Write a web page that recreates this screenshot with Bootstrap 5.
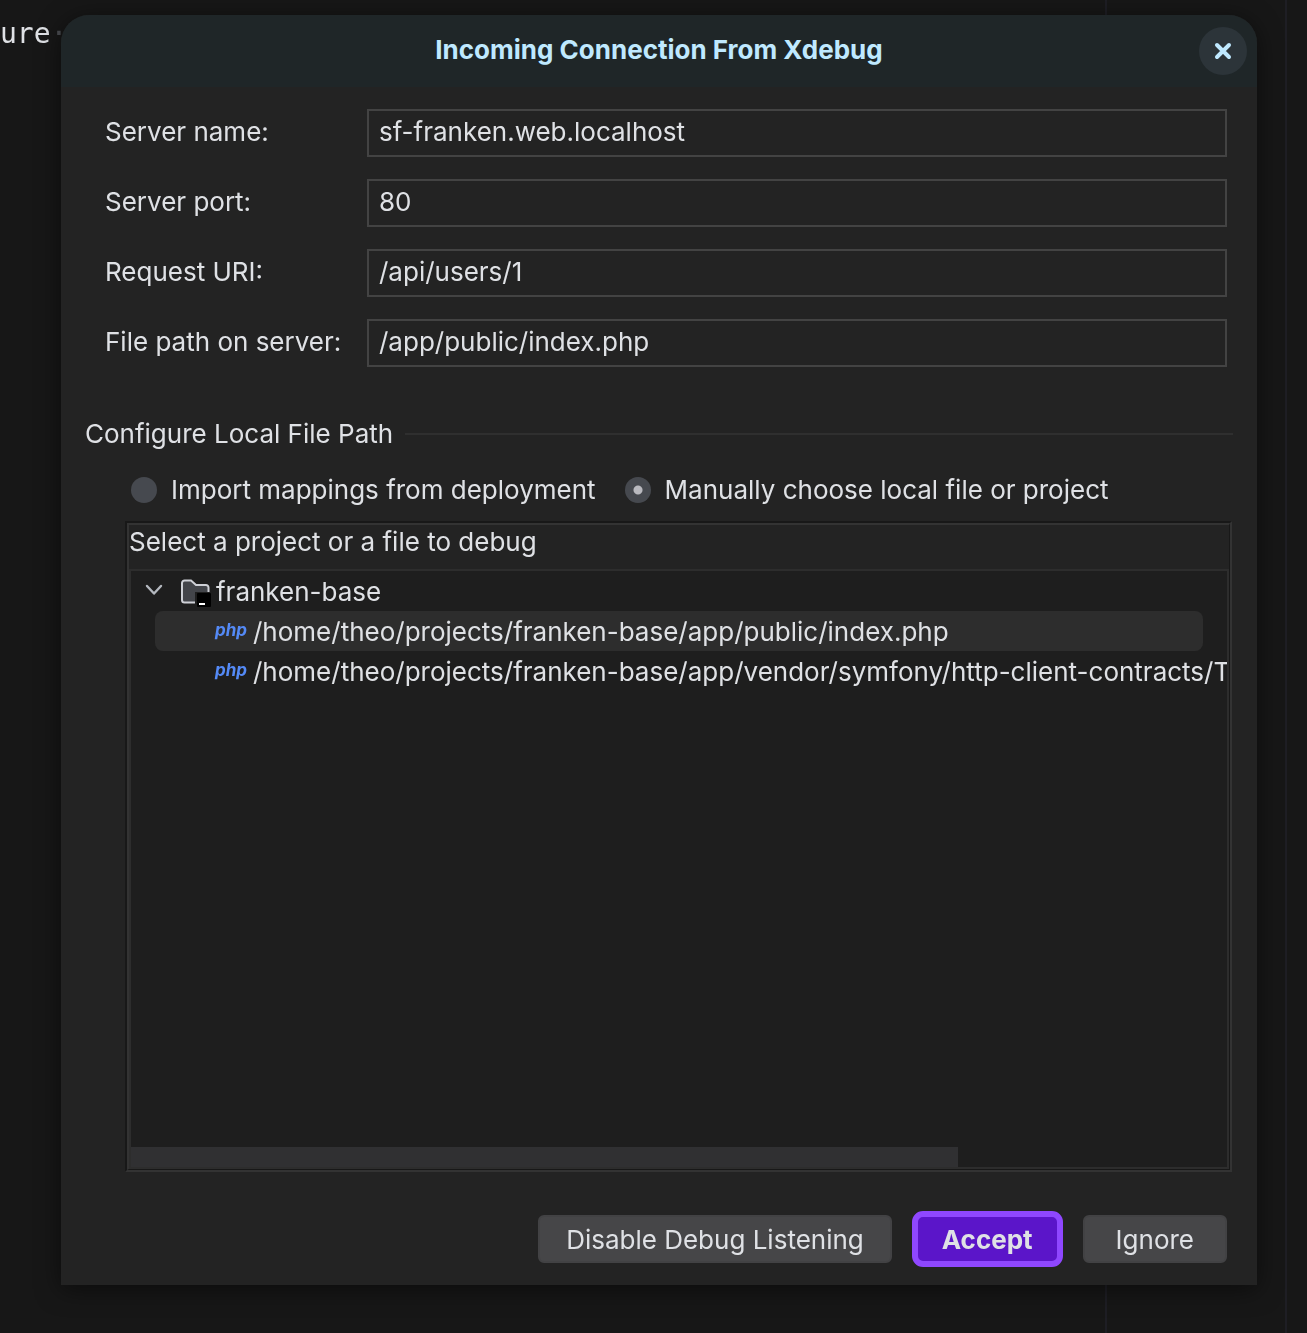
<!DOCTYPE html>
<html lang="en" data-bs-theme="dark">
<head>
<meta charset="utf-8">
<meta name="viewport" content="width=device-width, initial-scale=1">
<title>Incoming Connection From Xdebug</title>
<link href="https://cdn.jsdelivr.net/npm/bootstrap@5.3.0/dist/css/bootstrap.min.css" rel="stylesheet">
<style>
  body { background: #171717; color: #dfe1e5; font-family: Inter, sans-serif; font-size: 26px; line-height: 32px; }
  .editor-layer { z-index: 0; overflow: hidden; }
  .editor-code { font: 28px/32px "DejaVu Sans Mono", monospace; color: #dfe1e5; padding-top: 18px; width: 61px; }
  .editor-code span { color: #4b4d52; }
  .guide-area { width: 202px; border-left: 2px solid #1e1e24; padding-right: 20px; }
  .guide-area div { border-right: 2px solid #1e1e24; }
  .xd-dialog { z-index: 1; margin: 15px 50px 48px 61px; min-height: calc(100vh - 63px); background: #232323; border-radius: 28px 28px 0 0; box-shadow: 0 4px 24px rgba(0, 0, 0, .5); }
  .xd-header { height: 72px; background: #1f2628; border-radius: 28px 28px 0 0; padding: 12px 10px; }
  .xd-title { font-size: 26px; line-height: 32px; font-weight: 700; color: #bfe9ff; padding: 7px 0 0 48px; }
  .xd-close { width: 48px; height: 48px; border-radius: 50%; background: #2c3439; }
  .xd-form { padding: 22px 30px 0 44px; }
  .xd-form .form-row { min-height: 48px; margin-bottom: 22px; }
  .xd-form label { width: 262px; padding-bottom: 3px; }
  .xd-form .form-control { height: 48px; padding: 0 10px 3px; font-size: 26px; border: 2px solid #434343; border-radius: 0; background: #232323; color: #dfe1e5; box-shadow: none; }
  .xd-section { padding: 29px 24px 24px; gap: 12px; }
  .xd-section hr { border-top: 2px solid #2f2f2f; opacity: 1; }
  .xd-radios { padding: 0 30px 15px 70px; column-gap: 29px; }
  .xd-radios .form-check-input { width: 26px; height: 26px; margin: 0; border: 0; background-color: #46494f; }
  .xd-radios .form-check-input:checked { background: radial-gradient(circle, #b9b9bf 0 4px, #46494f 5px); }
  .xd-radios label { padding-left: 14px; }
  .xd-panel { margin: 0 25px 0 64px; border: 2px solid; border-color: #181818 #333 #333 #181818; }
  .xd-panel-inner { border: solid; border-width: 2px 1px 1px 2px; border-color: #333 #181818 #181818 #333; }
  .xd-panel-label { height: 44px; padding-top: 1px; }
  .xd-tree { background: #1e1e1e; border: 2px solid #2d2d2d; overflow: hidden; }
  .tree-line { height: 40px; padding: 2px 0 0 60px; margin: 0 24px; border-radius: 8px; white-space: nowrap; }
  .tree-line.is-root { padding-left: 0; margin-left: 14px; }
  .tree-line.is-selected { background: #2d2d2d; }
  .php-icon { width: 38px; font: italic 700 17px/24px Inter, sans-serif; color: #548af7; padding-bottom: 4px; }
  .root-icon { margin: 0 4px 0 15px; }
  .xd-scroll { height: 20px; width: 75.5%; background: #303032; }
  .xd-footer { padding: 39px 30px 18px; gap: 20px; }
  .xd-btn { height: 48px; border: 2px solid #424244; border-radius: 6px; background: #464648; color: #dfe1e5; font-size: 26px; line-height: 32px; padding: 2px 26px 0; }
  .xd-btn.is-wide { padding: 2px 31px 0; }
  .xd-btn:hover { background: #505052; color: #fff; border-color: #505052; }
  .xd-btn.is-default { height: 56px; border: 6px solid #8f47ff; border-radius: 11px; background: #5b15c9; font-weight: 700; padding: 2px 24px 0; }
</style>
<script src="https://cdn.jsdelivr.net/npm/bootstrap@5.3.0/dist/js/bootstrap.bundle.min.js"></script>
</head>
<body>
<div class="editor-layer position-fixed top-0 bottom-0 start-0 end-0 d-flex justify-content-between" aria-hidden="true">
  <div class="editor-code">ure<span>·</span></div>
  <div class="guide-area d-flex"><div class="flex-grow-1"></div></div>
</div>

<main class="xd-dialog position-relative d-flex flex-column" role="dialog" aria-labelledby="dialogTitle">
  <header class="xd-header d-flex align-items-start">
    <h1 class="xd-title flex-grow-1 text-center m-0" id="dialogTitle">Incoming Connection From Xdebug</h1>
    <button type="button" class="xd-close btn p-0 border-0 d-flex align-items-center justify-content-center" aria-label="Close">
      <svg width="18" height="18" viewBox="0 0 18 18" fill="none" stroke="#bfe9ff" stroke-width="4" stroke-linecap="round"><path d="M3 3l12 12M15 3L3 15"/></svg>
    </button>
  </header>

  <form class="d-flex flex-column flex-grow-1">
    <div class="xd-form">
      <div class="form-row d-flex align-items-center">
        <label class="flex-shrink-0" for="serverName">Server name:</label>
        <input class="form-control" id="serverName" type="text" value="sf-franken.web.localhost">
      </div>
      <div class="form-row d-flex align-items-center">
        <label class="flex-shrink-0" for="serverPort">Server port:</label>
        <input class="form-control" id="serverPort" type="text" value="80">
      </div>
      <div class="form-row d-flex align-items-center">
        <label class="flex-shrink-0" for="requestUri">Request URI:</label>
        <input class="form-control" id="requestUri" type="text" value="/api/users/1">
      </div>
      <div class="form-row d-flex align-items-center">
        <label class="flex-shrink-0" for="filePath">File path on server:</label>
        <input class="form-control" id="filePath" type="text" value="/app/public/index.php">
      </div>
    </div>

    <section class="d-flex flex-column flex-grow-1" role="group" aria-labelledby="sectionTitle">
      <div class="xd-section d-flex align-items-center">
        <span id="sectionTitle">Configure Local File Path</span>
        <hr class="flex-grow-1 m-0">
      </div>
      <div class="xd-radios d-flex flex-wrap">
        <div class="d-flex align-items-center">
          <input class="form-check-input" type="radio" name="mapping" id="importMappings">
          <label for="importMappings">Import mappings from deployment</label>
        </div>
        <div class="d-flex align-items-center">
          <input class="form-check-input" type="radio" name="mapping" id="manualChoice" checked>
          <label for="manualChoice">Manually choose local file or project</label>
        </div>
      </div>

      <div class="xd-panel d-flex flex-column flex-grow-1">
        <div class="xd-panel-inner d-flex flex-column flex-grow-1">
          <div class="xd-panel-label">Select a project or a file to debug</div>
          <div class="xd-tree d-flex flex-column flex-grow-1" role="tree" aria-label="Select a project or a file to debug">
            <div class="tree-line is-root d-flex align-items-center" role="treeitem" aria-expanded="true">
              <svg class="flex-shrink-0" width="20" height="20" viewBox="0 0 20 20" fill="none" stroke="#b4b8bf" stroke-width="2.4" stroke-linecap="round" stroke-linejoin="round"><path d="M2 4l7 7.500 7-7.500"/></svg>
              <svg class="root-icon flex-shrink-0" width="32" height="32" viewBox="0 0 32 32"><path d="M2 7a2.500 2.500 0 0 1 2.500-2.500h6.500l5 4.500h10a2.500 2.500 0 0 1 2.500 2.500v12.500a2.500 2.500 0 0 1-2.500 2.500H4.500a2.500 2.500 0 0 1-2.500-2.500z" fill="#43454a" stroke="#ced0d6" stroke-width="2"/><rect x="15" y="16" width="17" height="16" fill="#1e1e1e"/><rect x="17" y="17" width="14" height="14" rx="1" fill="#000"/><rect x="19" y="27" width="6" height="2" fill="#fff"/></svg>
              <span>franken-base</span>
            </div>
            <div class="tree-line is-selected d-flex align-items-center" role="treeitem" aria-selected="true">
              <span class="php-icon flex-shrink-0">php</span><span>/home/theo/projects/franken-base/app/public/index.php</span>
            </div>
            <div class="tree-line d-flex align-items-center" role="treeitem">
              <span class="php-icon flex-shrink-0">php</span><span>/home/theo/projects/franken-base/app/vendor/symfony/http-client-contracts/T</span>
            </div>
            <div class="xd-scroll mt-auto"></div>
          </div>
        </div>
      </div>
    </section>

    <footer class="xd-footer d-flex justify-content-end align-items-center">
      <button type="button" class="xd-btn btn">Disable Debug Listening</button>
      <button type="submit" class="xd-btn is-default btn">Accept</button>
      <button type="button" class="xd-btn is-wide btn">Ignore</button>
    </footer>
  </form>
</main>
</body>
</html>
